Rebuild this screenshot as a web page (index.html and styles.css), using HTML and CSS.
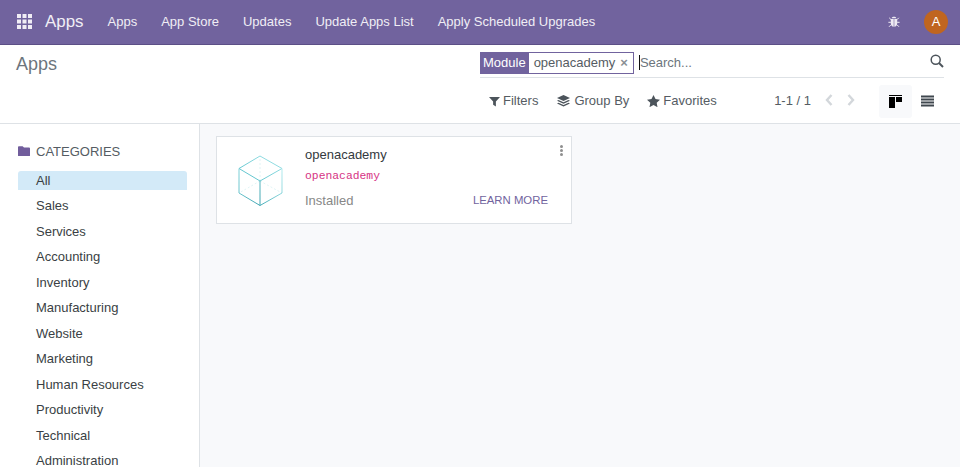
FILE: index.html
```html
<!DOCTYPE html>
<html lang="en">
<head>
<meta charset="utf-8">
<title>Apps</title>
<link rel="stylesheet" href="styles.css">
</head>
<body>
<header class="navbar">
  <svg class="grid-icon" viewBox="0 0 15 15" width="15" height="15" fill="#f0edf5"><path d="M0 0h4v4H0zM5.500 0h4v4h-4zM11 0h4v4h-4zM0 5.500h4v4H0zM5.500 5.500h4v4h-4zM11 5.500h4v4h-4zM0 11h4v4H0zM5.500 11h4v4h-4zM11 11h4v4h-4z"/></svg>
  <span class="brand">Apps</span>
  <nav class="menu">
    <a>Apps</a><a>App Store</a><a>Updates</a><a>Update Apps List</a><a>Apply Scheduled Upgrades</a>
  </nav>
  <div class="nav-right">
    <svg class="bug" viewBox="0 0 12 12" width="12" height="12" fill="#eeeaf3"><path d="M3.600 2.300C4 1 5 .7 6 .7s2 .3 2.400 1.600zM2.800 3h2.900v7.800C4 10.600 2.800 9.400 2.800 7.500zM6.300 3h2.900v4.500c0 1.900-1.200 3.100-2.900 3.300z"/><path d="M1.200 1.800l1.800 1.800M10.800 1.800L9 3.600M.4 6.300h2.500M11.600 6.300H9.100M1 10.800l2-2M11 10.800l-2-2" stroke="#eeeaf3" stroke-width="1" fill="none"/></svg>
    <span class="avatar">A</span>
  </div>
</header>

<section class="panel">
  <h1 class="title">Apps</h1>
  <div class="panel-right">
    <div class="searchbar">
      <span class="facet"><span class="facet-label">Module</span><span class="facet-value">openacademy<span class="facet-x">×</span></span></span>
      <span class="caret"></span><span class="placeholder">Search...</span>
      <svg class="search-icon" viewBox="0 0 14 14" width="14" height="14" fill="none" stroke="#4c545b"><circle cx="5.700" cy="5.700" r="4.500" stroke-width="1.500"/><path d="M9 9l4 4" stroke-width="2"/></svg>
    </div>
    <div class="tools">
      <div class="filters">
        <a class="tool"><svg viewBox="0 0 12 12" width="11" height="11" fill="#4c545b"><path d="M0 1h12L7.500 6v5.500l-3-2V6z"/></svg>Filters</a>
        <a class="tool tool-group"><svg viewBox="0 0 13 12" width="13" height="12" fill="#4c545b"><path d="M6.500 0l6.500 3-6.500 3L0 3z"/><path d="M1.500 5L6.500 7.300 11.500 5 13 5.800 6.500 8.800 0 5.800z"/><path d="M1.500 7.700L6.500 10 11.500 7.700 13 8.500 6.500 11.500 0 8.500z"/></svg>Group By</a>
        <a class="tool"><svg viewBox="0 0 13 12" width="13" height="12" fill="#4c545b"><path d="M6.500 0l2 4.100 4.500.6-3.300 3.100.8 4.400-4-2.100-4 2.100.8-4.400L0 4.700l4.500-.6z"/></svg>Favorites</a>
      </div>
      <div class="pager">
        <span class="pager-value">1-1 / 1</span>
        <svg class="prev" viewBox="0 0 8 12" width="8" height="12" fill="none" stroke="#d3d7db" stroke-width="2.400"><path d="M6.500 1L2 6l4.500 5"/></svg>
        <svg viewBox="0 0 8 12" width="8" height="12" fill="none" stroke="#d3d7db" stroke-width="2.400"><path d="M1.500 1L6 6l-4.500 5"/></svg>
      </div>
      <div class="views">
        <span class="view active"><svg viewBox="0 0 13 13" width="13" height="13" fill="#000"><path d="M0 0h13v1H0zM0 2h6v11H0zM7 2h6v5H7z"/></svg></span>
        <span class="view view-list"><svg viewBox="0 0 13 12" width="13" height="12" fill="#3f474e"><path d="M0 .5h13v2H0zM0 3.500h13v2H0zM0 6.500h13v2H0zM0 9.500h13v2H0z"/></svg></span>
      </div>
    </div>
  </div>
</section>

<main class="content">
  <aside class="sidebar">
    <div class="side-head">
      <svg viewBox="0 0 13 11" width="12" height="10.500" fill="#715d9c"><path d="M1 0h4l1.500 1.500H12a1 1 0 0 1 1 1V10a1 1 0 0 1-1 1H1a1 1 0 0 1-1-1V1a1 1 0 0 1 1-1z"/></svg>
      <span>CATEGORIES</span>
    </div>
    <ul class="cats">
      <li class="selected">All</li>
      <li>Sales</li>
      <li>Services</li>
      <li>Accounting</li>
      <li>Inventory</li>
      <li>Manufacturing</li>
      <li>Website</li>
      <li>Marketing</li>
      <li>Human Resources</li>
      <li>Productivity</li>
      <li>Technical</li>
      <li>Administration</li>
    </ul>
  </aside>
  <section class="kanban">
    <article class="card">
      <svg class="cube" viewBox="0 0 45 52" width="45" height="52" fill="none">
        <defs>
          <linearGradient id="cubeTop" x1="0" y1="1" x2="1" y2="0"><stop offset="0" stop-color="#4fbcc7"/><stop offset="1" stop-color="#a5e6ea"/></linearGradient>
          <linearGradient id="cubeFront" x1="0" y1="0" x2="1" y2="1"><stop offset="0" stop-color="#7fd2d9"/><stop offset="1" stop-color="#3fa5b1"/></linearGradient>
          <linearGradient id="cubeRight" x1="1" y1="0" x2="0" y2="1"><stop offset="0" stop-color="#b5ecef"/><stop offset="1" stop-color="#45adb8"/></linearGradient>
        </defs>
        <path d="M22 26V1M22 26L1 38M22 26l22 12" stroke="#d8f1f3" stroke-dasharray="2 2" stroke-width=".8"/>
        <path d="M22 1L44 13.500 22 26 1 13.500z" stroke="url(#cubeTop)"/>
        <path d="M1 13.500V38L22 50.500V26" stroke="url(#cubeFront)"/>
        <path d="M44 13.500V38L22 50.500" stroke="url(#cubeRight)"/>
      </svg>
      <div class="card-body">
        <div class="card-name">openacademy</div>
        <code class="card-code">openacademy</code>
        <div class="card-foot"><span class="installed">Installed</span><a class="learn">LEARN MORE</a></div>
      </div>
      <span class="kebab"><i></i><i></i><i></i></span>
    </article>
  </section>
</main>
</body>
</html>
```
FILE: styles.css
```css
* { box-sizing: border-box; }
html, body { margin: 0; height: 467px; overflow: hidden; }
body { font: 13px/19.5px "Liberation Sans", Arial, sans-serif; color: #4c4c4c; background: #fff; display: flex; flex-direction: column; }

.navbar { flex: none; height: 45px; background: #71639e; border-bottom: 1px solid #5c4f86; display: flex; align-items: center; color: #f0eef5; padding: 0 12px 0 17px; }
.grid-icon { margin-top: -1px; }
.brand { font-size: 16.9px; margin-left: 13px; margin-right: 24px; }
.menu { display: flex; gap: 24px; white-space: nowrap; }
.nav-right { margin-left: auto; display: flex; align-items: center; gap: 24px; }
.avatar { width: 24px; height: 24px; border-radius: 50%; background: #c0651f; color: #fff; display: flex; align-items: center; justify-content: center; }

.panel { flex: none; height: 79px; border-bottom: 1px solid #dee2e6; display: flex; padding: 7px 16px 0; }
.title { margin: 0; font-size: 18px; font-weight: 400; line-height: 24px; color: #6c757d; flex: none; width: 464px; }
.panel-right { flex: 1; min-width: 0; }
.searchbar { height: 26px; border-bottom: 1px solid #dee2e6; display: flex; align-items: center; padding-bottom: 4px; white-space: nowrap; }
.facet { display: flex; height: 22px; border: 1px solid #71639e; }
.facet-label { background: #71639e; color: #fff; padding: 0 3px 0 2px; line-height: 20px; }
.facet-value { padding: 0 5px 0 5px; line-height: 20px; color: #555c63; display: flex; }
.facet-x { margin-left: 5px; color: #8a8f94; font-size: 13px; font-weight: 700; }
.caret { width: 1px; height: 15px; background: #111; margin-left: 5px; }
.placeholder { color: #6c757d; }
.search-icon { margin-left: auto; margin-top: -3px; }

.tools { display: flex; align-items: center; margin-top: 6px; height: 34px; white-space: nowrap; }
.filters { display: flex; gap: 18px; padding-left: 9px; }
.tool { display: flex; align-items: center; gap: 3px; color: #555c63; }
.tool-group { gap: 4px; padding-left: 1px; }
.pager { display: flex; align-items: center; margin-left: auto; color: #555c63; }
.pager-value { margin-top: -1px; }
.prev { margin-left: 14px; margin-right: 14px; }
.pager svg { margin-top: -3px; }
.views { display: flex; margin-left: 24px; margin-right: -1px; }
.view { width: 33px; height: 33px; display: flex; align-items: center; justify-content: center; border-radius: 3px; }
.view.active { background: #f8f9fb; }
.view-list { padding-right: 2px; }

.content { flex: 1; min-height: 0; display: flex; overflow: hidden; }
.sidebar { flex: none; width: 200px; border-right: 1px solid #dee2e6; padding: 18px 12px 0 18px; }
.side-head { display: flex; align-items: center; gap: 6px; height: 20px; color: #555c63; }
.side-head svg { margin-top: -2px; }
.cats { list-style: none; margin: 8.900px 0 0; padding: 0; color: #3a3f44; }
.cats li { height: 19.5px; margin-bottom: 6px; padding-left: 18px; border-radius: 3px 3px 0 0; white-space: nowrap; }
.cats li.selected { background: #d3eaf8; }

.kanban { flex: 1; background: #f8f9fb; padding: 12px 16px; }
.card { position: relative; width: 356px; height: 88px; background: #fff; border: 1px solid #dee2e6; display: flex; padding: 8px 0 0 21px; }
.cube { flex: none; margin-top: 10px; }
.card-body { margin-left: 22px; flex: 1; padding-right: 23px; }
.card-name { color: #343a40; }
.card-code { display: block; font: 11.375px/19.5px "Liberation Mono", monospace; color: #d63384; margin-top: 2px; }
.card-foot { display: flex; align-items: center; justify-content: space-between; margin-top: 5px; }
.installed { color: #878787; }
.learn { color: #71639e; font-size: 11.375px; }
.kebab { position: absolute; top: 8px; right: 8px; display: flex; flex-direction: column; gap: 1px; }
.kebab i { width: 3px; height: 3px; border-radius: 50%; background: #8f8f8f; }
```
